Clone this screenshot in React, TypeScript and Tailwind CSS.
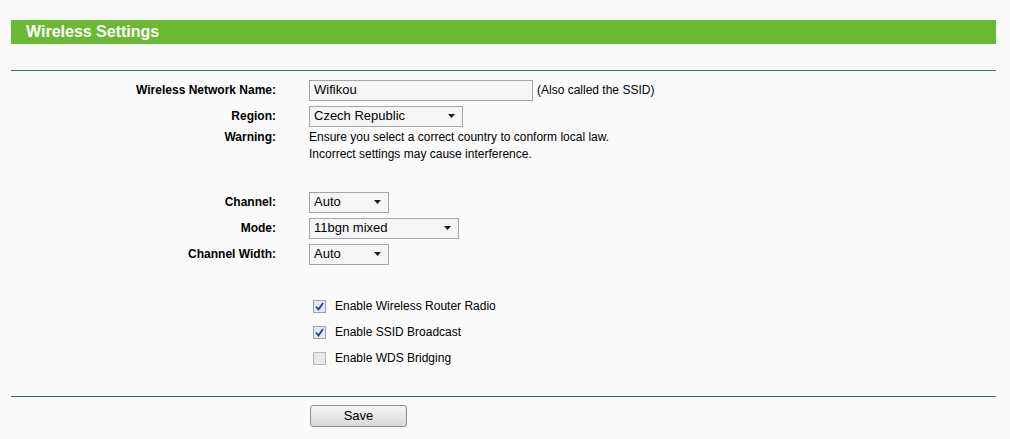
import type { ReactNode } from 'react';

function Row({ label, children, className = 'h-[26px] items-center' }: { label?: string; children?: ReactNode; className?: string }) {
  return (
    <div className={`grid grid-cols-[265px_1fr] gap-x-[33px] ${className}`}>
      <div className="text-right font-bold">{label}</div>
      <div className="flex items-center">{children}</div>
    </div>
  );
}

function Select({ value, width }: { value: string; width: string }) {
  return (
    <div className={`${width} h-[21px] flex items-center justify-between border border-[#a5a5a5] bg-[#f5f5f5] pl-[4px] pr-[7px] text-[13px]`}>
      <span>{value}</span>
      <svg width="7" height="4" viewBox="0 0 7 4">
        <path d="M0 0h7L3.5 4z" fill="#1a1a2e" />
      </svg>
    </div>
  );
}

function Check({ checked, label }: { checked: boolean; label: string }) {
  return (
    <div className="flex items-center gap-[9px] pl-[4px]">
      <div className={`w-[13px] h-[13px] border flex items-center justify-center ${checked ? 'border-[#9aa3b5] bg-[#e4e8f1]' : 'border-[#b8b8b8] bg-[#e9e9e9]'}`}>
        {checked && (
          <svg width="9" height="9" viewBox="0 0 9 9">
            <path d="M1 4.5l2.5 3L8 1" stroke="#2b3f8c" strokeWidth="1.8" fill="none" />
          </svg>
        )}
      </div>
      <span>{label}</span>
    </div>
  );
}

export default function App() {
  return (
    <div className="min-h-[439px] bg-[#fafafa] text-black text-[12px] font-['Liberation_Sans',Arial,sans-serif] pt-[20px] px-[11px] pr-[14px]">
      {/* Title bar */}
      <div className="h-[24px] bg-[#69b934] flex items-center pl-[15px]">
        <h1 className="text-white font-bold text-[16px]">Wireless Settings</h1>
      </div>

      <div className="mt-[26px] border-t border-[#2d7a58]" />

      <div className="pt-[6px]">
        <Row label="Wireless Network Name:">
          <div className="w-[224px] h-[21px] border border-[#a5a5a5] bg-[#f5f5f5] pl-[4px] flex items-center text-[13px]">Wifikou</div>
          <span className="ml-[4px]">(Also called the SSID)</span>
        </Row>
        <Row label="Region:">
          <Select value="Czech Republic" width="w-[154px]" />
        </Row>
        <Row label="Warning:" className="items-start leading-[17px]">
          <div>
            <div>Ensure you select a correct country to conform local law.</div>
            <div>Incorrect settings may cause interference.</div>
          </div>
        </Row>
        <Row />
        <Row label="Channel:">
          <Select value="Auto" width="w-[80px]" />
        </Row>
        <Row label="Mode:">
          <Select value="11bgn mixed" width="w-[150px]" />
        </Row>
        <Row label="Channel Width:">
          <Select value="Auto" width="w-[80px]" />
        </Row>
        <Row />
        <Row>
          <Check checked label="Enable Wireless Router Radio" />
        </Row>
        <Row>
          <Check checked label="Enable SSID Broadcast" />
        </Row>
        <Row>
          <Check checked={false} label="Enable WDS Bridging" />
        </Row>
      </div>

      <div className="mt-[25px] border-t border-[#2d7a58]" />

      <div className="grid grid-cols-[265px_1fr] gap-x-[34px] pt-[8px]">
        <div />
        <button className="w-[97px] h-[22px] rounded-[3px] border border-[#8c8c8c] bg-gradient-to-b from-[#f6f6f6] to-[#d9d9d9] text-[13px]">
          Save
        </button>
      </div>
    </div>
  );
}
